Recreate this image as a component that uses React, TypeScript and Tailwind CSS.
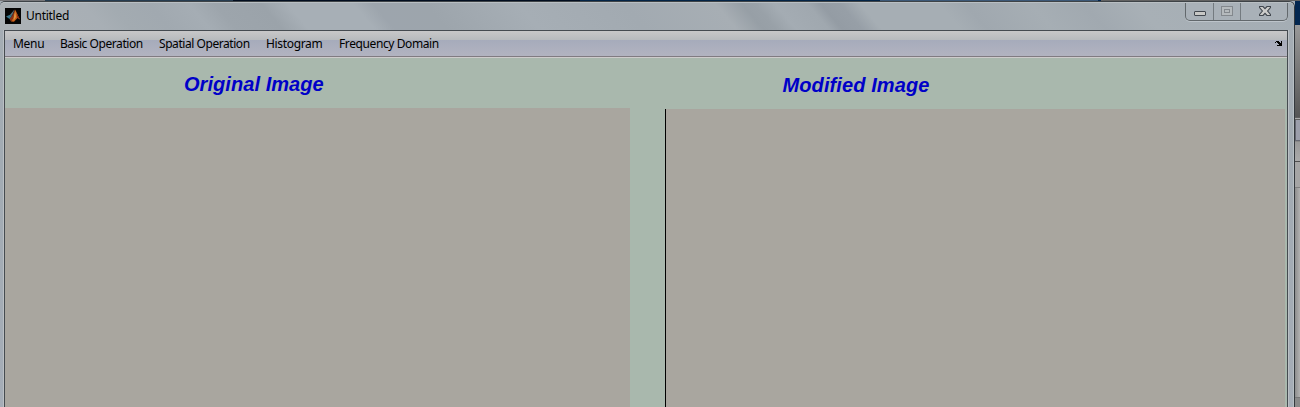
import React from "react";

const menus = [
  { label: "Menu", cls: "w-[47px] tracking-[-0.3px]" },
  { label: "Basic Operation", cls: "w-[99px] tracking-[-0.44px]" },
  { label: "Spatial Operation", cls: "w-[107px] tracking-[-0.44px]" },
  { label: "Histogram", cls: "w-[73px] tracking-[-0.33px]" },
  { label: "Frequency Domain", cls: "w-[110px] tracking-[-0.4px]" },
];

function Logo() {
  return (
    <svg width="16" height="16" viewBox="0 0 16 16" className="shrink-0 bg-[#050505]">
      <path d="M1 8.5 5 6.7 7 8 4.5 11Z" fill="#39778c" />
      <path d="M5 6.7 9.5 1.5 7 8Z" fill="#55727a" />
      <path d="M4.5 11 7 8 10 1.5 8.8 8.5 6 13.5Z" fill="#8c3219" />
      <path d="M10 1.5C11.5 3.5 13 8 15 11.5L12.5 10 9 13.8 6 13.5 8.5 9Z" fill="#c65a16" />
      <path d="M10.2 3 11 9 8.5 13 9 8Z" fill="#dc9440" />
      <path d="M11.5 5 15 11.5 12.3 9.5Z" fill="#822817" />
    </svg>
  );
}

function WindowButtons() {
  return (
    <div className="flex h-[18px] w-[103px] rounded-b-[5px] border border-t-0 border-[#62686c] bg-[#a9b1b8] shadow-[0_1px_0_#bdc4ca]">
      <div className="flex w-[28px] items-start justify-center border-r border-[#747b80] pt-[8px]">
        <svg width="12" height="5">
          <rect x="0.5" y="0.5" width="11" height="4" rx="0.5" fill="#c8c8c6" stroke="#42484f" />
        </svg>
      </div>
      <div className="flex w-[27px] items-start justify-center border-r border-[#747b80] pt-[3px]">
        <svg width="12" height="10" fill="none" stroke="#83888d">
          <rect x="0.5" y="0.5" width="11" height="9" fill="#b5babd" />
          <rect x="3.5" y="3.5" width="5" height="3" />
        </svg>
      </div>
      <div className="flex flex-1 items-start justify-center pt-[3px] pl-[2px]">
        <svg width="12" height="10">
          <path d="M.5.5H4L6 2.7 8 .5H11.5V1.5L8.6 5 11.5 8.5V9.5H8L6 7.3 4 9.5H.5V8.5L3.4 5 .5 1.5Z" fill="#cdcdcb" stroke="#42484f" strokeWidth="1.15" />
        </svg>
      </div>
    </div>
  );
}

export default function App() {
  return (
    <div className="flex h-[407px] w-[1300px] flex-col overflow-hidden bg-[#a5adb4] font-['Noto_Sans','Open_Sans',sans-serif] text-[12px] text-black">
      <div className="flex h-px shrink-0">
        <div className="w-[45px] bg-[#77777a]" />
        <div className="w-[100px] bg-[#263c50]" />
        <div className="w-[88px] bg-[#263c50]" />
        <div className="w-[347px] bg-[#020e20]" />
        <div className="w-[300px] bg-[#032446]" />
        <div className="w-[218px] bg-[#3c5877]" />
        <div className="w-[3px] bg-[#032750]" />
        <div className="w-[199px] bg-[#626262]" />
      </div>
      <div className="flex min-h-0 flex-1">
        <div className="flex w-[1295px] flex-col rounded-tr-[6px] rounded-tl-[5px] border-t border-r border-t-[#3e4347] border-r-[#34393e] bg-[linear-gradient(#a5adb4,#a2abb3_40%,#a5adb7)]">
          <div className="flex h-[28px] shrink-0 items-start justify-between rounded-t-[5px] border-t border-[#b9bfc3] bg-[linear-gradient(50deg,#acb2b6_0%,#a8afb5_8%,#a3abb1_10%,#a1a9b0_13%,#a5adb4_16%,#9da5ac_18%,#9ba3aa_21.5%,#a7afb6_23.5%,#a7afb6_28.5%,#9da5ad_30%,#9da5ac_34%,#a6aeb5_41%,#a2aab1_49%,#a7aeb4_56%,#979fa6_58%,#99a1a8_59%,#a4acb3_60.5%,#a0a8af_63%,#949ca4_64%,#979fa7_65.5%,#a6aeb4_67%,#a6aeb4_73%,#a0a8af_75%,#a6aeb4_80%,#a1a9b0_84%,#a8b0b6_88%,#a4adb4_100%)] pr-[6px] pl-[5px]">
            <div className="flex pt-[5px]">
              <Logo />
              <span className="ml-[5px] pt-px text-[12px] leading-[14px] tracking-[-0.27px]">Untitled</span>
            </div>
            <WindowButtons />
          </div>
          <div className="flex min-h-0 flex-1">
            <div className="w-[4px] border-r border-[#bbc0c4]" />
            <main className="flex w-[1284px] flex-col border-t border-r border-l border-[#454b50]">
              <nav className="flex h-[27px] shrink-0 items-start border-b border-[#cecbcb] bg-[linear-gradient(#c8c8c8_0px,#b7babd_9px,#a6abbb_9px,#b2b3c0_25px,#807b81_25px,#807b81_26px)] pt-[5px] pr-[5px] pl-[8px] leading-[16px]">
                {menus.map((item) => (
                  <span key={item.label} className={`shrink-0 whitespace-nowrap ${item.cls}`}>{item.label}</span>
                ))}
                <svg width="7" height="5" viewBox="0 0 7 5" className="mt-[5px] ml-auto" shapeRendering="crispEdges">
                  <path d="M1 0H4V1H5V2H6V0H7V5H2V4H4V3H3V2H2V1H1V2H0V1H1Z" fill="#000" />
                </svg>
              </nav>
              <div className="flex min-h-0 flex-1 bg-[#a9b8ad] font-['Liberation_Sans',sans-serif] text-[20px] leading-[24px] font-bold text-[#0000c8] italic">
                <section className="flex w-[625px] flex-col">
                  <h2 className="h-[50px] shrink-0 pt-[14px] pl-[179px] tracking-[0.06px]">Original Image</h2>
                  <div className="flex-1 bg-[#a9a69f]" />
                </section>
                <section className="ml-[35px] flex w-[620px] flex-col">
                  <h2 className="h-[51px] shrink-0 pt-[15px] pl-[117.5px] tracking-[0.1px]">Modified Image</h2>
                  <div className="flex-1 border-l border-black bg-[#a9a69f]" />
                </section>
              </div>
            </main>
            <div className="flex-1 border-r border-l border-r-[#b7bfc3] border-l-[#bbc0c4]" />
          </div>
        </div>
        <div className="flex flex-1 flex-col bg-[#a8a8a8]">
          <div className="h-[24px] bg-[#032750]" />
          <div className="h-[92px] bg-[linear-gradient(#999,#555)]" />
          <div className="h-[3px] border-y border-[#606060] bg-[#aaa]" />
          <div className="h-[21px] border-b border-l border-[#666872] bg-[#9b9eab]" />
          <div className="h-[21px] border-t border-b border-t-[#888] border-b-[#505050] bg-[linear-gradient(#999,#aaa)]" />
          <div className="h-[26px] border-b border-[#808080] bg-[#a5a5a5]" />
          <div className="flex-1 bg-[linear-gradient(90deg,#8e8e8e,#b1b1b1)]" />
          <div className="h-[10px] border-t border-[#777] bg-[#898989]" />
        </div>
      </div>
    </div>
  );
}
